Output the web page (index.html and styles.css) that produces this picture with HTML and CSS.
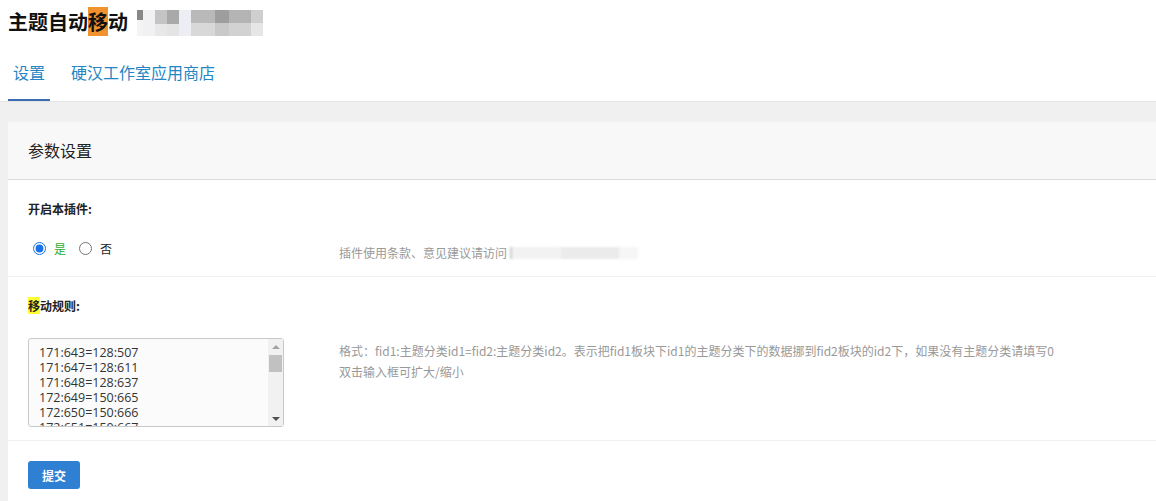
FILE: index.html
```html
<!DOCTYPE html>
<html lang="zh-CN">
  <head>
    <meta charset="UTF-8" />
    <meta name="viewport" content="width=device-width, initial-scale=1.0" />
    <title>主题自动移动</title>
    <link rel="stylesheet" href="styles.css">
  </head>
  <body>
    <div class="top">
      <h2 class="title">
        主题自动<span class="hl-orange">移</span>动
        <span class="blur-ver">
          <i class="b1"></i><i class="b2"></i><i class="b3"></i><i class="b4"></i><i class="b5"></i><i class="b6"></i><i class="b7"></i><i class="b8"></i><i class="b9"></i>
        </span>
      </h2>
      <div class="tabs">
        <a class="tab active">设置</a>
        <a class="tab">硬汉工作室应用商店</a>
      </div>
    </div>

    <div class="main">
      <div class="card">
        <div class="card-head">参数设置</div>

        <div class="item">
          <div class="item-label">开启本插件:</div>
          <div class="item-row">
            <div class="item-field radios">
              <label class="radio"><input type="radio" name="open" checked /><span class="yes">是</span></label>
              <label class="radio"><input type="radio" name="open" /><span>否</span></label>
            </div>
            <div class="item-help help-one">
              插件使用条款、意见建议请访问 <span class="blur-url"></span>
            </div>
          </div>
        </div>

        <div class="item">
          <div class="item-label"><span class="hl-yellow">移</span>动规则:</div>
          <div class="item-row">
            <div class="item-field">
              <div class="rules-wrap">
                <textarea class="rules">171:643=128:507
171:647=128:611
171:648=128:637
172:649=150:665
172:650=150:666
172:651=150:667
172:652=150:668
173:655=151:670
173:656=151:671
173:657=151:672
174:660=152:680
174:661=152:681
174:662=152:682
175:664=153:690
175:665=153:691
175:666=153:692
176:670=154:700
176:671=154:701</textarea>
                <!-- scrollbar drawn by hand, the renderer hides native ones -->
                <div class="scrollbar">
                  <div class="sb-btn"><span class="arrow-up"></span></div>
                  <div class="sb-thumb"></div>
                  <div class="sb-space"></div>
                  <div class="sb-btn"><span class="arrow-down"></span></div>
                </div>
              </div>
            </div>
            <div class="item-help help-two">
              格式：fid1:主题分类id1=fid2:主题分类id2。表示把fid1板块下id1的主题分类下的数据挪到fid2板块的id2下，如果没有主题分类请填写0<br />
              双击输入框可扩大/缩小
            </div>
          </div>
        </div>

        <div class="actions">
          <button type="button" class="btn-submit">提交</button>
        </div>
      </div>
    </div>
  </body>
</html>
```

FILE: styles.css
```css
body {
  margin: 0;
  font-family: "Noto Sans CJK SC", "Noto Sans", sans-serif;
  color: #222;
  background: #fff;
}
.top {
  padding: 0 0 0 8px;
}
.title {
  margin: 0;
  height: 42px;
  display: flex;
  align-items: center;
  font-size: 20px;
  font-weight: bold;
  color: #111;
}
.hl-orange {
  background: #f0922e;
}
.hl-yellow {
  background: #ffff33;
}
.blur-ver {
  display: inline-flex;
  margin-left: 9px;
  margin-top: 4px;
  height: 26px;
  filter: blur(0.6px);
}
.blur-ver i {
  display: block;
  height: 26px;
}
.blur-ver .b1 { width: 6px; background: linear-gradient(#888 0 40%, #f4f4f4 40%); }
.blur-ver .b2 { width: 12px; background: #f1f1f3; }
.blur-ver .b3 { width: 12px; background: linear-gradient(#c4c4c4 0 55%, #e8e8e8 55%); }
.blur-ver .b4 { width: 12px; background: linear-gradient(#a9a9a9 0 55%, #e4e4e4 55%); }
.blur-ver .b5 { width: 12px; background: #eceef3; }
.blur-ver .b6 { width: 24px; background: linear-gradient(#b9b9b9 0 50%, #d8d8d8 50%); }
.blur-ver .b7 { width: 14px; background: linear-gradient(#9e9e9e 0 50%, #c9c9c9 50%); }
.blur-ver .b8 { width: 22px; background: linear-gradient(#b4b4b4 0 50%, #d2d2d2 50%); }
.blur-ver .b9 { width: 12px; background: linear-gradient(#cfcfcf 0 50%, #e6e6e6 50%); }

.tabs {
  display: flex;
  height: 59px;
  align-items: stretch;
  border-bottom: 1px solid #e4e4e4;
  margin-left: -8px;
  padding-left: 8px;
}
.tab {
  display: flex;
  align-items: center;
  padding: 2px 5px 0 5px;
  margin-right: 16px;
  font-size: 16px;
  color: #2486c2;
  border-bottom: 2px solid transparent;
  cursor: pointer;
}
.tab.active {
  border-bottom-color: #3b6db3;
}

.main {
  background: #f0f0f0;
  padding: 20px 0 0 8px;
}
.card {
  background: #fff;
}
.card-head {
  height: 57px;
  line-height: 57px;
  padding-left: 20px;
  background: #f8f8f8;
  border-bottom: 1px solid #dcdcdc;
  font-size: 16px;
  color: #222;
}
.item {
  padding: 21px 20px 0 20px;
  border-bottom: 1px solid #efefef;
}
.item-label {
  font-size: 12px;
  font-weight: bold;
  line-height: 16px;
  color: #222;
}
.item-row {
  display: flex;
  align-items: flex-start;
  margin-top: 22px;
}
.item-field {
  width: 311px;
  flex-shrink: 0;
}
.item-help {
  font-size: 12px;
  line-height: 21px;
  color: #999;
}
.radios {
  display: flex;
  gap: 8px;
  height: 20px;
  align-items: center;
  margin-top: -1px;
  margin-bottom: 18px;
}
.radio {
  display: flex;
  align-items: center;
  font-size: 12px;
  color: #222;
}
.radio input {
  margin: 0 8px 0 5px;
  width: 13px;
  height: 13px;
  accent-color: #1a72e6;
}
.radio .yes {
  color: #2cae2c;
}
.help-one {
  margin-top: 3px;
}
.help-two {
  margin-top: 4px;
}
.blur-url {
  display: inline-block;
  width: 128px;
  height: 12px;
  vertical-align: -1px;
  background: linear-gradient(90deg, #ccc 0 2px, #f2f2f2 2px 40%, #ebebeb 40% 85%, #f6f6f6 85%);
  filter: blur(0.8px);
}
.rules-wrap {
  position: relative;
  width: 256px;
  margin: 2px 0 13px 0;
}
.rules {
  display: block;
  box-sizing: border-box;
  width: 256px;
  height: 89px;
  margin: 0;
  padding: 6px 16px 0 10px;
  border: 1px solid #c8c8c8;
  border-radius: 3px;
  background: #fbfbfb;
  font-family: "Open Sans", "Noto Sans", sans-serif;
  font-size: 12.5px;
  line-height: 15px;
  color: #333;
  resize: none;
  overflow: hidden;
}
.scrollbar {
  position: absolute;
  top: 1px;
  right: 1px;
  bottom: 1px;
  width: 15px;
  background: #f1f1f1;
  display: flex;
  flex-direction: column;
}
.sb-btn {
  height: 15px;
  display: flex;
  align-items: center;
  justify-content: center;
}
.arrow-up {
  width: 0;
  height: 0;
  border-left: 4px solid transparent;
  border-right: 4px solid transparent;
  border-bottom: 4px solid #a3a3a3;
}
.arrow-down {
  width: 0;
  height: 0;
  border-left: 4px solid transparent;
  border-right: 4px solid transparent;
  border-top: 4px solid #505050;
}
.sb-thumb {
  height: 17px;
  margin: 1px 1px 0 1px;
  background: #c1c1c1;
}
.sb-space {
  flex: 1;
}
.actions {
  padding: 20px 20px 12px 20px;
}
.btn-submit {
  width: 52px;
  height: 28px;
  border: none;
  border-radius: 3px;
  background: #2f7fd3;
  color: #fff;
  font-family: "Noto Sans CJK SC", sans-serif;
  font-size: 12px;
  font-weight: bold;
  cursor: pointer;
}
```
